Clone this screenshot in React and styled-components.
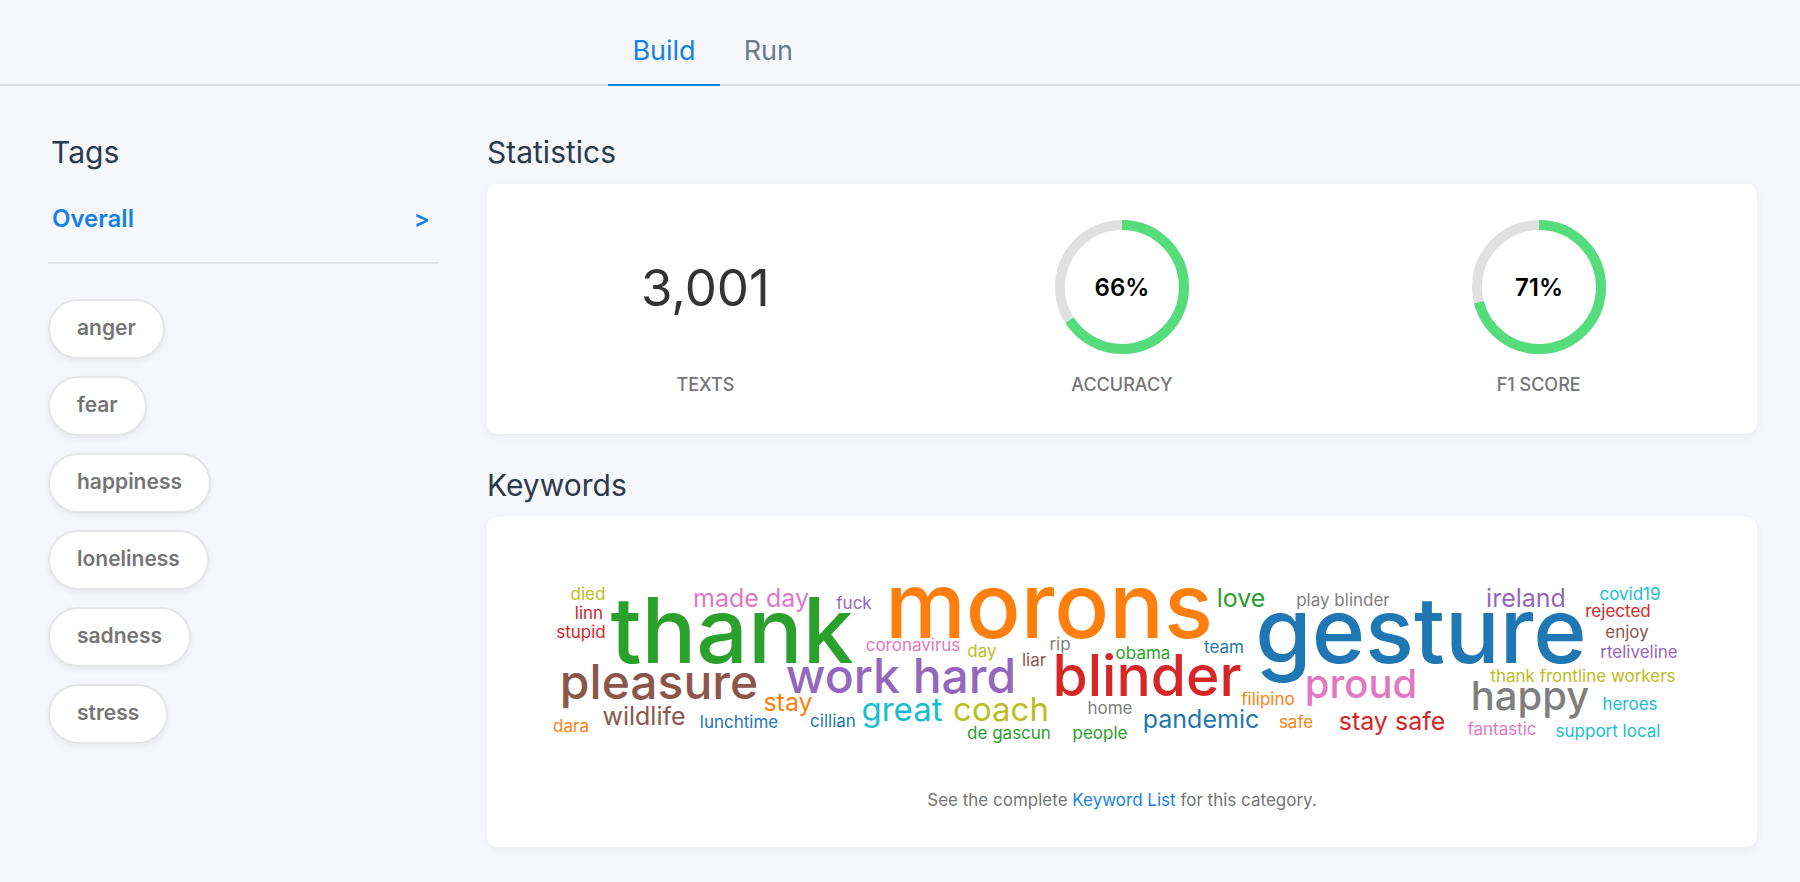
import { useState } from "react";
import styled, { createGlobalStyle } from "styled-components";

const GlobalStyle = createGlobalStyle`
  * {
    box-sizing: border-box;
  }

  body {
    margin: 0;
    background-color: #f5f7fb;
    color: #757575;
    font-family: Inter, Roboto, sans-serif;
  }

  button {
    font-family: inherit;
    cursor: pointer;
  }
`;

const Header = styled.header`
  border-bottom: 2px solid #d9dbde;
  padding-left: 33.8%;
`;

const Tabs = styled.nav`
  display: flex;
`;

const Tab = styled.button`
  height: 86px;
  margin-bottom: -2px;
  padding: 18px 24px 0;
  background: none;
  border: none;
  border-bottom: 2px solid ${({ $active }) => ($active ? "#1482e9" : "transparent")};
  color: ${({ $active }) => ($active ? "#1482e9" : "#6c7a8c")};
  font-size: 27px;
  line-height: 36px;
`;

const Main = styled.main`
  display: grid;
  grid-template-columns: 390px minmax(0, 1fr);
  column-gap: 49px;
  padding: 48px 43px 35px 48px;

  @media (max-width: 900px) {
    grid-template-columns: minmax(0, 1fr);
  }
`;

const Title = styled.h2`
  margin: 0 0 14px;
  color: #2c3a4b;
  font-size: 30px;
  font-weight: 400;
  line-height: 36px;
`;

const SideTitle = styled(Title)`
  padding-left: 3px;
`;

const Overall = styled.button`
  display: flex;
  justify-content: space-between;
  width: 100%;
  padding: 19px 8px 27px 4px;
  background: none;
  border: none;
  border-bottom: 2px solid #dfe1e5;
  color: #1482e9;
  font-size: 24px;
  font-weight: 600;
  line-height: 32px;
`;

const TagList = styled.ul`
  display: flex;
  flex-direction: column;
  align-items: flex-start;
  gap: 17px;
  margin: 0;
  padding: 35px 0 0;
  list-style: none;
`;

const Tag = styled.button`
  height: 60px;
  padding: 0 27px 4px;
  background-color: #fff;
  border: 2px solid #e6e6e7;
  border-radius: 30px;
  box-shadow: 0 3px 6px rgba(0, 0, 0, 0.06);
  color: #757575;
  font-size: 21px;
  font-weight: 600;
`;

const Card = styled.section`
  background-color: #fff;
  border-radius: 10px;
  box-shadow: 0 3px 8px rgba(0, 0, 0, 0.05);
`;

const Stats = styled(Card)`
  display: grid;
  grid-template-columns: repeat(3, 1fr);
  margin-bottom: 33px;
  padding: 36px 10px;
`;

const Stat = styled.div`
  display: flex;
  flex-direction: column;
  align-items: center;
  gap: 18px;
`;

const StatValue = styled.div`
  display: flex;
  align-items: center;
  height: 134px;
  color: #333;
  font-size: 51px;
`;

const StatLabel = styled.div`
  font-size: 18px;
  font-weight: 500;
  line-height: 26px;
`;

const Ring = styled.svg`
  display: block;
  width: 134px;
  height: 134px;
`;

const RingText = styled.text`
  fill: #000;
  font-size: 24px;
  font-weight: 600;
  text-anchor: middle;
`;

const Keywords = styled(Card)`
  padding: 23px 35px 32px;
`;

const Cloud = styled.svg`
  display: block;
  width: 100%;
`;

const Word = styled.text`
  fill: ${({ $color }) => $color};
  font-size: ${({ $size }) => $size}px;
  font-weight: ${({ $size }) => ($size >= 40 ? 500 : 400)};
  text-anchor: middle;
`;

const Note = styled.p`
  margin: 26px 0 0;
  font-size: 17px;
  line-height: 29px;
  text-align: center;

  a {
    color: #1482e9;
    text-decoration: none;
  }
`;

const tabs = ["Build", "Run"];

const tags = ["anger", "fear", "happiness", "loneliness", "sadness", "stress"];

const scores = [
  { label: "ACCURACY", value: 66 },
  { label: "F1 SCORE", value: 71 },
];

const blue = "#1f77b4";
const orange = "#ff7f0e";
const green = "#2ca02c";
const red = "#d62728";
const purple = "#9467bd";
const brown = "#8c564b";
const pink = "#e377c2";
const gray = "#7f7f7f";
const olive = "#bcbd22";
const cyan = "#17becf";

// x is the middle of the word, y its baseline
const words = [
  { text: "thank", size: 91, x: 210, y: 123, color: green },
  { text: "morons", size: 91, x: 527, y: 98, color: orange },
  { text: "gesture", size: 91, x: 899, y: 123, color: blue },
  { text: "blinder", size: 57, x: 625, y: 156, color: red },
  { text: "pleasure", size: 48, x: 137, y: 159, color: brown },
  { text: "work hard", size: 48, x: 379, y: 153, color: purple },
  { text: "proud", size: 40, x: 839, y: 158, color: pink },
  { text: "happy", size: 40, x: 1008, y: 170, color: gray },
  { text: "great", size: 33, x: 380, y: 181, color: cyan },
  { text: "coach", size: 33, x: 479, y: 181, color: olive },
  { text: "made day", size: 25, x: 229, y: 67, color: pink },
  { text: "love", size: 25, x: 719, y: 67, color: green },
  { text: "ireland", size: 25, x: 1004, y: 67, color: purple },
  { text: "stay", size: 25, x: 266, y: 171, color: orange },
  { text: "wildlife", size: 25, x: 122, y: 185, color: brown },
  { text: "pandemic", size: 25, x: 679, y: 188, color: blue },
  { text: "stay safe", size: 25, x: 870, y: 190, color: red },
  { text: "died", size: 17, x: 66, y: 60, color: olive },
  { text: "linn", size: 17, x: 67, y: 79, color: red },
  { text: "stupid", size: 17, x: 59, y: 98, color: red },
  { text: "fuck", size: 17, x: 332, y: 69, color: purple },
  { text: "coronavirus", size: 17, x: 391, y: 111, color: pink },
  { text: "day", size: 17, x: 460, y: 117, color: olive },
  { text: "liar", size: 17, x: 512, y: 126, color: brown },
  { text: "rip", size: 17, x: 538, y: 110, color: gray },
  { text: "obama", size: 17, x: 621, y: 119, color: green },
  { text: "team", size: 17, x: 702, y: 113, color: blue },
  { text: "play blinder", size: 17, x: 821, y: 66, color: gray },
  { text: "covid19", size: 17, x: 1108, y: 60, color: cyan },
  { text: "rejected", size: 17, x: 1096, y: 77, color: red },
  { text: "enjoy", size: 17, x: 1105, y: 98, color: brown },
  { text: "rteliveline", size: 17, x: 1117, y: 118, color: purple },
  { text: "thank frontline workers", size: 17, x: 1061, y: 142, color: olive },
  { text: "heroes", size: 17, x: 1108, y: 170, color: cyan },
  { text: "support local", size: 17, x: 1086, y: 197, color: cyan },
  { text: "fantastic", size: 17, x: 980, y: 195, color: pink },
  { text: "safe", size: 17, x: 774, y: 188, color: orange },
  { text: "filipino", size: 17, x: 746, y: 165, color: orange },
  { text: "home", size: 17, x: 588, y: 174, color: gray },
  { text: "people", size: 17, x: 578, y: 199, color: green },
  { text: "de gascun", size: 17, x: 487, y: 199, color: green },
  { text: "cillian", size: 17, x: 311, y: 187, color: blue },
  { text: "lunchtime", size: 17, x: 217, y: 188, color: blue },
  { text: "dara", size: 17, x: 49, y: 192, color: orange },
];

const Score = ({ label, value }) => (
  <Stat>
    <Ring viewBox="0 0 134 134" role="img" aria-label={`${value}%`}>
      <circle cx="67" cy="67" r="62" fill="none" stroke="#e0e0e0" strokeWidth="10" />
      <circle
        cx="67"
        cy="67"
        r="62"
        fill="none"
        stroke="#55dd7c"
        strokeWidth="10"
        pathLength="100"
        strokeDasharray={`${value} 100`}
        transform="rotate(-90 67 67)"
      />
      <RingText x="67" y="76">
        {value}%
      </RingText>
    </Ring>
    <StatLabel>{label}</StatLabel>
  </Stat>
);

const App = () => {
  const [activeTab, setActiveTab] = useState("Build");

  return (
    <>
      <GlobalStyle />
      <Header>
        <Tabs>
          {tabs.map((tab) => (
            <Tab key={tab} $active={tab === activeTab} onClick={() => setActiveTab(tab)}>
              {tab}
            </Tab>
          ))}
        </Tabs>
      </Header>

      <Main>
        <aside>
          <SideTitle>Tags</SideTitle>
          <Overall>
            <span>Overall</span>
            <span>&gt;</span>
          </Overall>
          <TagList>
            {tags.map((tag) => (
              <li key={tag}>
                <Tag>{tag}</Tag>
              </li>
            ))}
          </TagList>
        </aside>

        <div>
          <Title>Statistics</Title>
          <Stats>
            <Stat>
              <StatValue>3,001</StatValue>
              <StatLabel>TEXTS</StatLabel>
            </Stat>
            {scores.map((score) => (
              <Score key={score.label} {...score} />
            ))}
          </Stats>

          <Title>Keywords</Title>
          <Keywords>
            <Cloud viewBox="0 0 1200 220">
              {words.map(({ text, size, x, y, color }) => (
                <Word key={text} x={x} y={y} $size={size} $color={color}>
                  {text}
                </Word>
              ))}
            </Cloud>
            <Note>
              See the complete <a href="#keywords">Keyword List</a> for this category.
            </Note>
          </Keywords>
        </div>
      </Main>
    </>
  );
};

export default App;
